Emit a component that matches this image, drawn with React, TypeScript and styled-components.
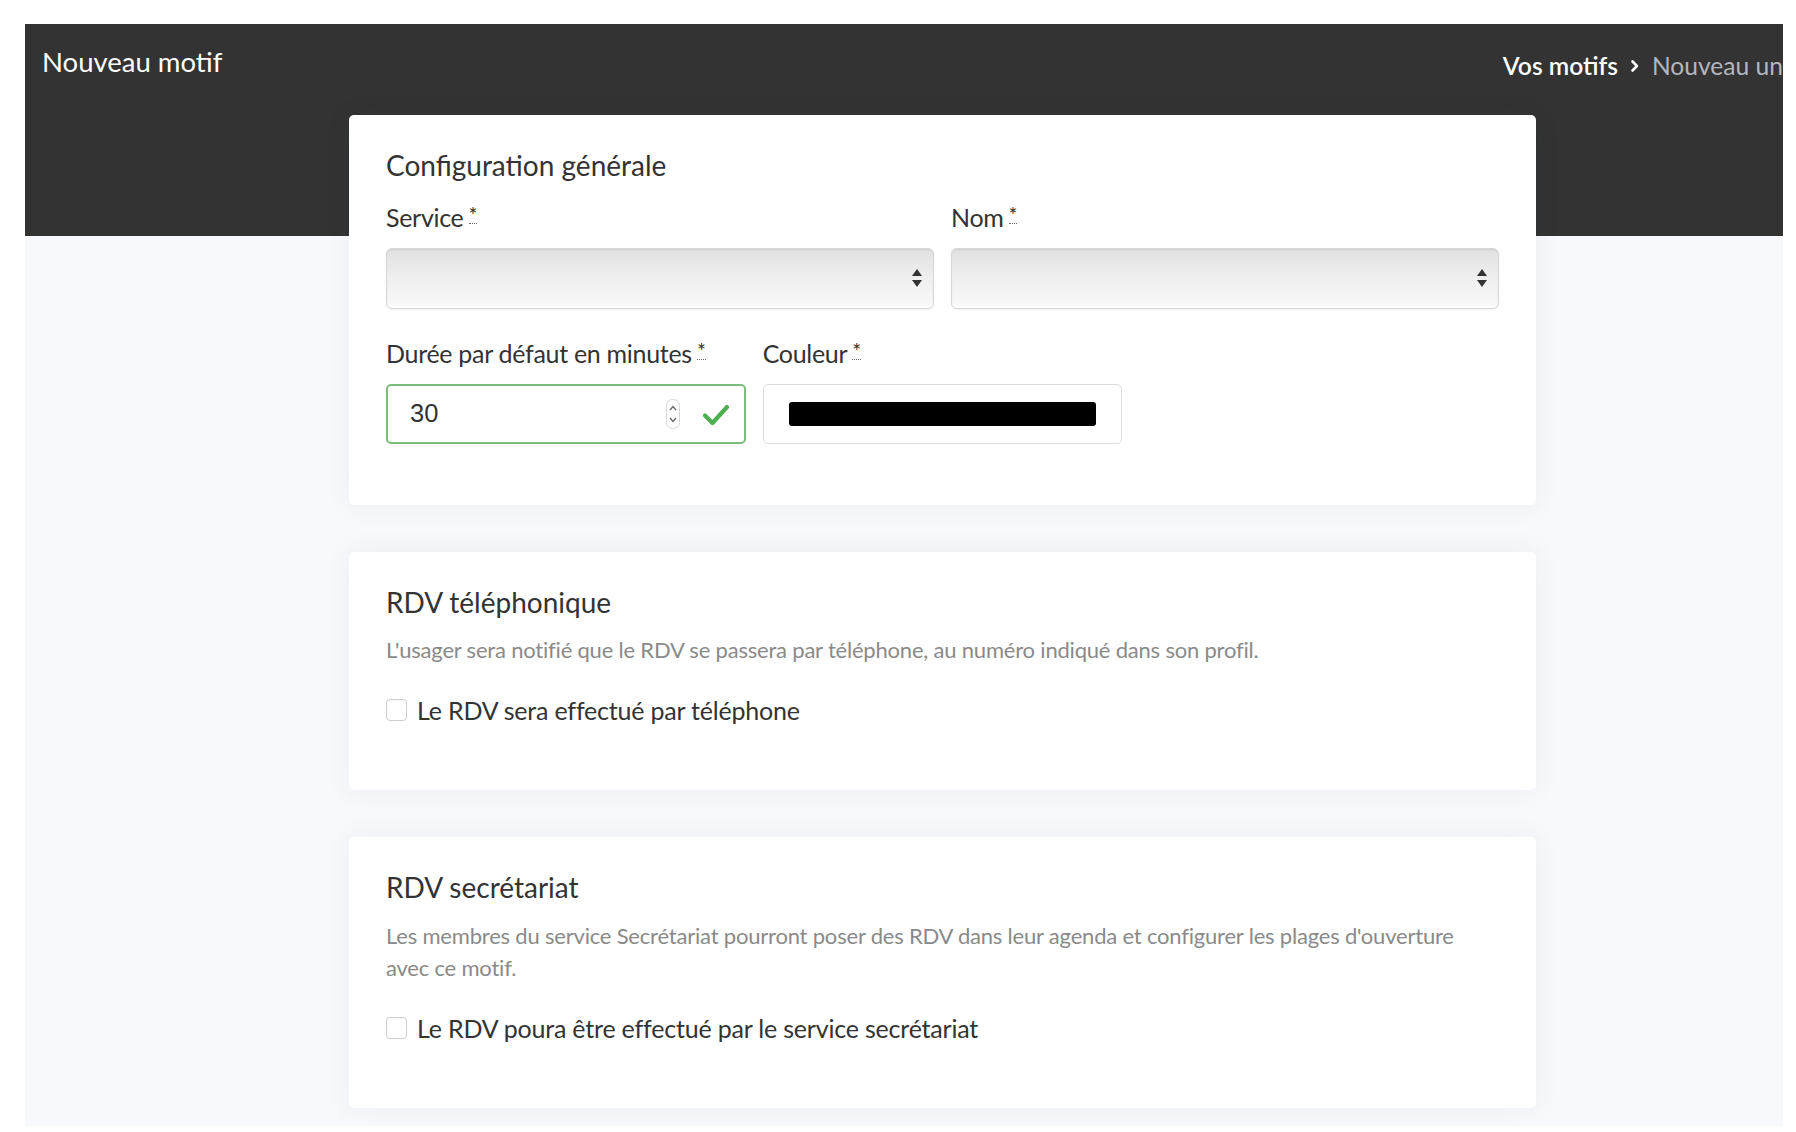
import React from 'react';
import styled, { createGlobalStyle } from 'styled-components';

const GlobalStyle = createGlobalStyle`
  html, body {
    margin: 0;
    padding: 0;
    background: #ffffff;
  }
  body {
    font-family: Lato, "Noto Sans", sans-serif;
    color: #333333;
    -webkit-font-smoothing: antialiased;
  }
  * {
    box-sizing: border-box;
  }
`;

const Page = styled.div`
  padding: 24px 13px 6px 25px;
`;

const Screen = styled.div`
  background: #f8f9fc;
  height: 1102px;
  overflow: hidden;
`;

const Hero = styled.header`
  background: #333333;
  height: 212px;
  display: flex;
  justify-content: space-between;
  align-items: flex-start;
  padding-left: 17px;
`;

const PageTitle = styled.h1`
  margin: 21px 0 0;
  font-size: 27.5px;
  font-weight: 400;
  line-height: 1.2;
  color: #ffffff;
`;

const Breadcrumb = styled.nav`
  margin-top: 27px;
  display: flex;
  align-items: center;
  gap: 12px;
  font-size: 24.6px;
  line-height: 1.2;
  white-space: nowrap;
`;

const Crumb = styled.span<{ current?: boolean }>`
  color: ${p => (p.current ? '#b3b6bd' : '#ffffff')};
  font-weight: ${p => (p.current ? 400 : 600)};
`;

const Main = styled.main`
  margin-top: -121px;
  margin-left: 324px;
  width: 1187px;
  display: flex;
  flex-direction: column;
  gap: 47px;
`;

const Card = styled.section<{ bottom?: number }>`
  background: #ffffff;
  border-radius: 5px;
  box-shadow: 0 0 28px rgba(40, 50, 90, 0.06);
  padding: 34px 37px ${p => p.bottom ?? 61}px;
`;

const CardTitle = styled.h2`
  margin: 0;
  font-size: 28px;
  font-weight: 400;
  line-height: 1.2;
  color: #333333;
`;

const Grid = styled.div<{ cols: number; top: number }>`
  display: grid;
  grid-template-columns: repeat(${p => p.cols}, 1fr);
  column-gap: 17px;
  margin-top: ${p => p.top}px;
`;

const Field = styled.div`
  display: flex;
  flex-direction: column;
  gap: 17px;
`;

const Label = styled.label`
  font-size: 25px;
  letter-spacing: -0.3px;
  line-height: 28px;
  color: #333333;
`;

const Required = styled.abbr`
  text-decoration: none;
  border-bottom: 1px dotted #666;
  font-size: 21px;
  margin-left: 5px;
  display: inline-block;
  line-height: 17px;
  vertical-align: 4px;
`;

const SelectBox = styled.div`
  position: relative;
  height: 61px;
  border: 1px solid #d6d6d6;
  border-radius: 6px;
  background: linear-gradient(#e1e1e1, #efefef 50%, #fafafa);
  box-shadow: inset 0 1px 2px rgba(0, 0, 0, 0.08), inset 0 -2px 2px rgba(255, 255, 255, 0.9), 0 1px 2px rgba(0, 0, 0, 0.05);
`;

const SelectArrows = styled.svg`
  position: absolute;
  right: 10px;
  top: 50%;
  transform: translateY(-50%);
`;

const InputWrap = styled.div<{ valid?: boolean }>`
  position: relative;
  height: 60px;
  border: ${p => (p.valid ? '2px solid #7cbd7c' : '1px solid #dddddd')};
  border-radius: 5px;
  background: #ffffff;
  display: flex;
  align-items: center;
`;

const NumberInput = styled.input`
  border: none;
  outline: none;
  background: transparent;
  font-family: "Liberation Sans", Arial, sans-serif;
  font-size: 25.5px;
  color: #333333;
  padding-left: 22px;
  width: 200px;
`;

const Spinner = styled.svg`
  position: absolute;
  right: 64px;
  top: 13px;
`;

const CheckMark = styled.svg`
  position: absolute;
  right: 14px;
  top: 17px;
`;

const ColorSwatch = styled.div`
  margin: 0 25px;
  flex: 1;
  height: 24px;
  background: #000000;
  border-radius: 3px;
`;

const Description = styled.p`
  margin: 15px 0 0;
  font-size: 22px;
  letter-spacing: -0.2px;
  line-height: 32px;
  color: #8a8a8a;
  max-width: 1095px;
`;

const CheckRow = styled.label`
  display: flex;
  align-items: center;
  gap: 10px;
  margin-top: 30px;
  height: 28px;
  font-size: 25px;
  letter-spacing: -0.2px;
  color: #333333;
`;

const CheckBox = styled.span`
  width: 21px;
  height: 22px;
  border: 1px solid #cfcfcf;
  border-radius: 4px;
  background: #ffffff;
  box-shadow: inset 0 1px 1px rgba(0, 0, 0, 0.04);
  flex-shrink: 0;
`;

const Chevron = () => (
  <svg width="10" height="14" viewBox="0 0 10 14">
    <path d="M2.5 2.5 L7 7 L2.5 11.5" fill="none" stroke="#ffffff" strokeWidth="2.6" strokeLinecap="round" strokeLinejoin="round" />
  </svg>
);

const UpDown = () => (
  <SelectArrows width="12" height="20" viewBox="0 0 12 20">
    <path d="M6 1 L11 8 L1 8 Z" fill="#333333" />
    <path d="M6 19 L11 12 L1 12 Z" fill="#333333" />
  </SelectArrows>
);

const Req = () => <Required title="requis">*</Required>;

export default function App() {
  return (
    <>
      <GlobalStyle />
      <Page>
        <Screen>
          <Hero>
            <PageTitle>Nouveau motif</PageTitle>
            <Breadcrumb>
              <Crumb>Vos motifs</Crumb>
              <Chevron />
              <Crumb current>Nouveau un</Crumb>
            </Breadcrumb>
          </Hero>

          <Main>
            <Card>
              <CardTitle>Configuration générale</CardTitle>
              <Grid cols={2} top={20}>
                <Field>
                  <Label>Service<Req /></Label>
                  <SelectBox><UpDown /></SelectBox>
                </Field>
                <Field>
                  <Label>Nom<Req /></Label>
                  <SelectBox><UpDown /></SelectBox>
                </Field>
              </Grid>
              <Grid cols={3} top={30}>
                <Field>
                  <Label>Durée par défaut en minutes<Req /></Label>
                  <InputWrap valid>
                    <NumberInput defaultValue="30" readOnly />
                    <Spinner width="14" height="30" viewBox="0 0 14 30">
                      <rect x="0.5" y="0.5" width="13" height="29" rx="6" fill="#ffffff" stroke="#d6d6d6" />
                      <path d="M4 11 L7 7.5 L10 11" fill="none" stroke="#666" strokeWidth="1.3" />
                      <path d="M4 19 L7 22.5 L10 19" fill="none" stroke="#666" strokeWidth="1.3" />
                    </Spinner>
                    <CheckMark width="28" height="24" viewBox="0 0 28 24">
                      <path d="M3 12.5 L10.5 20 L25 4" fill="none" stroke="#4caf50" strokeWidth="4.2" strokeLinecap="round" strokeLinejoin="round" />
                    </CheckMark>
                  </InputWrap>
                </Field>
                <Field>
                  <Label>Couleur<Req /></Label>
                  <InputWrap>
                    <ColorSwatch />
                  </InputWrap>
                </Field>
              </Grid>
            </Card>

            <Card bottom={66}>
              <CardTitle>RDV téléphonique</CardTitle>
              <Description>
                L'usager sera notifié que le RDV se passera par téléphone, au numéro indiqué dans son profil.
              </Description>
              <CheckRow>
                <CheckBox />
                Le RDV sera effectué par téléphone
              </CheckRow>
            </Card>

            <Card bottom={66}>
              <CardTitle>RDV secrétariat</CardTitle>
              <Description>
                Les membres du service Secrétariat pourront poser des RDV dans leur agenda et configurer les plages d'ouverture avec ce motif.
              </Description>
              <CheckRow>
                <CheckBox />
                Le RDV poura être effectué par le service secrétariat
              </CheckRow>
            </Card>
          </Main>
        </Screen>
      </Page>
    </>
  );
}
